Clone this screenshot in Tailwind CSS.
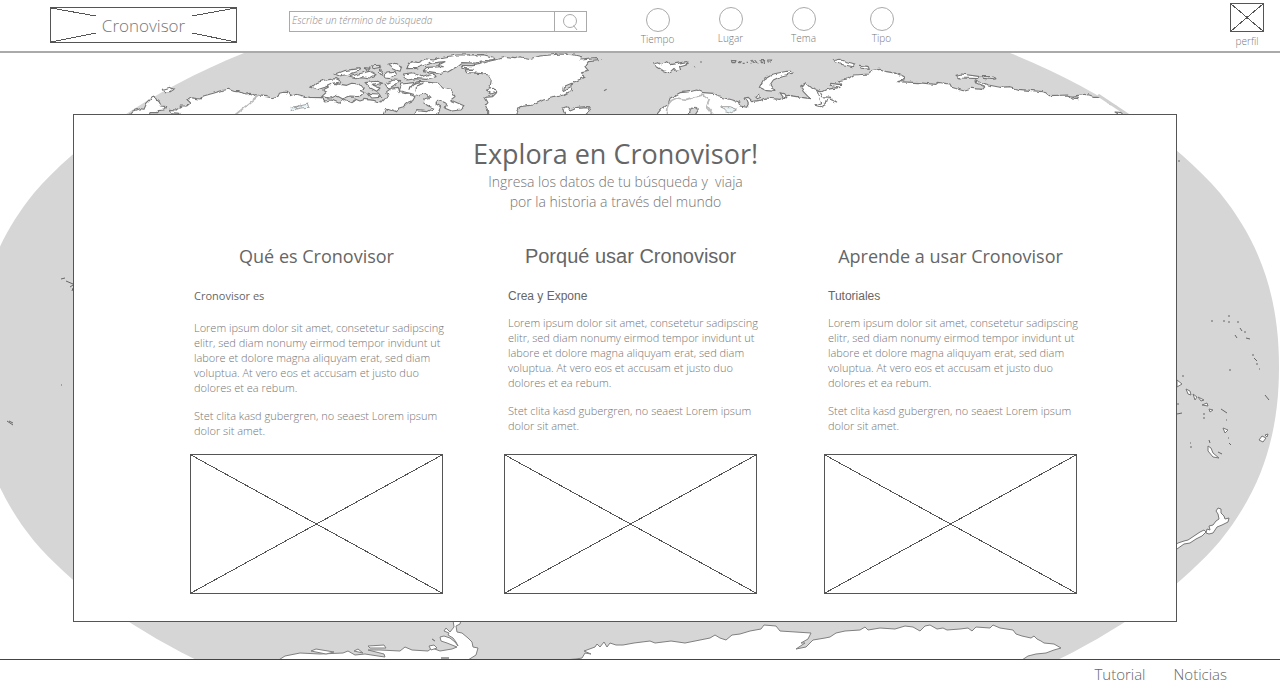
<!DOCTYPE html>
<html lang="es">
<head>
<meta charset="utf-8">
<meta name="viewport" content="width=device-width, initial-scale=1">
<title>Cronovisor</title>
<script src="https://cdn.jsdelivr.net/npm/@tailwindcss/browser@4"></script>
</head>
<body class="flex min-h-screen flex-col bg-white font-['Open_Sans','Noto_Sans',sans-serif] font-light text-[#757575]">

<header class="flex h-[53px] shrink-0 items-start border-b-2 border-[#aaaaaa] pl-[50px] pr-4">
  <a href="#" class="relative mt-[7px] flex h-9 w-[187px] shrink-0 items-center justify-center border border-[#555555] text-[17px] text-[#777777]">
    <svg class="absolute inset-0 h-full w-full" viewBox="0 0 185 34" preserveAspectRatio="none" fill="none" stroke="#555" shape-rendering="crispEdges" aria-hidden="true">
      <path d="M0 0L45 8M185 0L141 8M0 34L45 25M185 34L141 25"/>
    </svg>
    <span class="pt-px">Cronovisor</span>
  </a>

  <form class="ml-[52px] mt-[11px] flex h-[21px] w-[298px] border border-[#aaaaaa]" role="search">
    <input type="search" aria-label="Buscar" placeholder="Escribe un término de búsqueda" class="min-w-0 flex-1 px-[2px] pb-[2px] font-['Open_Sans','Noto_Sans',sans-serif] text-[10px] font-light italic text-[#777777] outline-none placeholder:text-[#888888]">
    <button type="button" aria-label="Buscar" class="flex w-8 items-center justify-center border-l border-[#aaaaaa]">
      <svg class="h-[18px] w-[18px]" viewBox="0 0 18 18" fill="none" stroke="#aaa" aria-hidden="true"><circle cx="8" cy="8" r="6.5"/><path d="M11.500 12.500L15 17"/></svg>
    </button>
  </form>

  <nav class="ml-[34px] flex text-center text-[10px] leading-[14px] text-[#777777]" aria-label="Filtros">
    <a href="#" class="flex w-[73px] flex-col items-center pt-2"><span class="h-6 w-6 rounded-full border border-[#aaaaaa]"></span>Tiempo</a>
    <a href="#" class="flex w-[73px] flex-col items-center pt-[7px]"><span class="h-6 w-6 rounded-full border border-[#aaaaaa]"></span>Lugar</a>
    <a href="#" class="flex w-[73px] flex-col items-center pt-[7px]"><span class="h-6 w-6 rounded-full border border-[#aaaaaa]"></span>Tema</a>
    <a href="#" class="ml-[5px] flex w-[73px] flex-col items-center pt-[7px]"><span class="h-6 w-6 rounded-full border border-[#aaaaaa]"></span>Tipo</a>
  </nav>

  <a href="#" class="ml-auto flex flex-col items-center pt-[3px] text-[10px] leading-[14px] text-[#777777]">
    <svg class="mb-[2px] h-[29px] w-[34px]" viewBox="0 0 34 29" fill="none" stroke="#555" shape-rendering="crispEdges" aria-hidden="true"><path d="M.5 .5H33.5V28.5H.5ZM.5 .5L33.5 28.5M33.5 .5L.5 28.5"/></svg>
    perfil
  </a>
</header>

<main class="relative flex flex-1 flex-col">
  <svg class="absolute inset-0 h-full w-full" viewBox="0 53 1280 606" preserveAspectRatio="xMidYMid slice" aria-hidden="true">
    <defs>
      <!-- roughens the coastlines -->
      <filter id="coast" filterUnits="userSpaceOnUse" x="0" y="40" width="1280" height="640">
        <feTurbulence type="fractalNoise" baseFrequency=".16" numOctaves="2" seed="4" result="n"/>
        <feDisplacementMap in="SourceGraphic" in2="n" scale="4" xChannelSelector="R" yChannelSelector="G"/>
      </filter>
    </defs>
    <path fill="#d6d6d6" d="M1279 367C1279 300 1262 245 1220 193C1177 143 1105 91 1010 53H244C149 91 77 143 34 193C-8 245 -25 300 -25 367C-25 434 -8 489 34 541C77 591 149 643 244 681H1010C1105 643 1177 591 1220 541C1262 489 1279 434 1279 367Z"/>

    <!-- northern lands, drawn at three times their size -->
    <g filter="url(#coast)">
    <g transform="scale(.33333)" fill="#fff" stroke="#777" stroke-width="3.3" stroke-linejoin="round">
      <path d="M400 334L420 326 432 328 440 310 460 290 475 303 482 318 500 320 495 330 475 332 470 338 450 338 445 350H385Z"/>
      <path d="M490 268L510 262 522 268 512 275 495 275Z"/>
      <path d="M530 350L540 340 512 338 508 328 530 330 545 322 540 318 560 318 570 310 560 300 570 293 600 297 610 288 640 280 665 272 685 268 705 275 720 275 735 282 750 280 770 287 800 290 815 293 835 288 838 280 850 277 863 277 870 290 890 283 910 288 930 292 965 293 975 303 995 300 1018 310 1025 298 1050 307 1065 297 1080 303 1095 298 1125 302 1143 306 1150 298 1165 292 1160 275 1175 264 1195 262 1200 278 1230 283 1245 290 1238 302 1220 310 1210 320 1195 325 1190 335 1160 325 1150 350Z"/>
      <path d="M965 290L980 276 968 270 985 262 970 253 990 248 1040 256 1055 250 1080 252 1090 264 1078 272 1095 278 1082 290 1050 288 1030 296 1010 286 990 294Z"/>
      <path d="M932 262L945 250 975 240 1010 236 1025 245 1000 250 975 262 950 270Z"/>
      <path d="M1005 222L1030 212 1080 206 1075 214 1050 222 1018 228Z"/>
      <path d="M1045 232L1075 222 1110 214 1128 224 1110 234 1080 230 1065 236Z"/>
      <path d="M1115 198L1138 196 1142 202 1120 206ZM1140 207L1150 215 1145 226 1138 218ZM1152 228L1160 216 1185 214 1190 224 1170 236 1155 234ZM1092 203L1110 205 1104 213ZM1164 196L1185 190 1205 200 1200 214 1180 208Z"/>
      <path d="M1095 248L1130 244 1148 250 1120 256 1140 264 1130 274 1112 264ZM1104 280L1135 282 1142 292 1115 294ZM1155 252L1180 240 1205 242 1185 254 1165 266Z"/>
      <path d="M1210 222L1240 218 1265 230 1300 218 1308 230 1280 238 1245 236 1220 240Z"/>
      <path d="M1220 206L1235 185 1255 188 1280 176 1300 180 1330 172 1370 165 1450 164 1480 172 1485 178 1440 184 1445 190 1385 188 1370 200 1345 215 1320 220 1270 212 1280 202 1330 200 1315 195 1335 185 1290 190 1250 205Z"/>
      <path d="M1198 272L1205 252 1240 248 1260 244 1315 250 1325 264 1350 268 1362 282 1365 290 1352 300 1392 317 1380 330 1355 333 1335 325 1340 312 1315 300 1305 310 1322 320 1310 350H1240L1250 332 1282 335 1302 325 1285 318 1270 308 1272 298 1293 292 1280 280 1255 287 1230 280Z"/>
      <path d="M1230 270Q1232 250 1260 248M1248 272Q1245 252 1270 250" fill="none"/>
      <path d="M1463 350V330L1456 316 1464 308 1455 292 1478 290 1490 278 1485 268 1468 272 1474 240 1465 225 1440 220 1400 218 1395 210 1420 208 1386 205 1385 196 1415 197 1440 193 1470 183 1495 178 1515 172 1545 176 1560 170 1590 176 1620 168 1680 162 1720 164 1745 170 1740 180 1790 176 1795 182 1765 185 1755 200 1765 212 1745 215 1752 232 1735 240 1715 250 1690 260 1688 272 1710 262 1718 250 1714 272 1690 285 1630 300 1600 315 1560 320 1545 350Z"/>
      <path d="M1456 270L1480 265 1490 275 1475 282ZM1685 325L1700 320 1710 330 1730 322 1765 320 1772 330 1755 350H1700Z"/>
      <path d="M1958 192L1975 188 1988 194 2000 185 2010 194 2060 185 2068 190 2038 198 2042 210 2030 214 2022 205 2008 218 1990 212Z"/>
      <path d="M2194 182H2208L2205 188H2196ZM2215 182H2224L2222 188H2216ZM2283 182H2294L2292 188H2284ZM2303 180H2316L2312 186H2304ZM2100 186H2106M2082 200H2084M2228 190H2234M2240 187H2244M2252 180L2262 190M2264 180L2272 190M2252 190H2272M1812 272L1820 268M1800 177H1803M2060 191H2066" fill="none"/>
      <path d="M1965 350L1985 325 2005 310 2010 295 2040 278 2070 275 2090 270 2110 278 2140 280 2155 290 2190 298 2215 305 2220 318 2240 322 2245 312 2240 300 2232 294 2245 292 2258 305 2275 302 2300 294 2340 298 2365 286 2430 296 2410 275 2402 258 2418 248 2440 268 2460 275 2468 290 2490 292 2510 306 2490 298 2480 298 2475 315 2460 320 2445 316 2465 308 2460 295 2450 270 2465 275 2480 268 2520 262 2490 256 2492 250 2525 254 2515 242 2545 236 2560 225 2610 222 2615 212 2640 208 2660 215 2690 220 2710 230 2712 240 2690 245 2755 248 2805 253 2812 247 2850 252 2855 262 2890 272 2915 265 2948 268 2955 260 2930 250 2925 242 2965 255 3000 262 3030 260 3055 268 3130 275 3145 287 3205 285 3215 290 3255 283 3280 289 3300 289 3390 350Z"/>
      <path d="M2278 262L2290 240 2320 222 2360 214 2375 214 2378 220 2345 228 2320 240 2310 255 2325 274 2300 272Z"/>
      <path d="M2500 182L2520 178 2535 184 2565 192 2560 200 2530 194 2505 188ZM2578 196L2605 200 2608 208 2580 204ZM2868 226L2885 222 2940 230 2935 236 2880 234ZM2946 230L2975 230 2988 236 2975 238 2950 235ZM2340 278L2355 282 2364 294 2350 292ZM2266 290L2278 286 2282 292 2272 296ZM3205 286L3235 292 3232 296 3215 293ZM3345 336L3370 338 3360 345Z"/>
      <path d="M2062 350L2070 328 2085 322 2095 330 2082 350Z" fill="#d6d6d6"/>
      <path d="M2165 320L2190 320 2212 328 2195 338 2175 332Z" fill="#eaf5f8" stroke-width="2"/>
      <path d="M868 322L898 318 925 312 928 322 900 324 872 332M885 326L902 312" fill="#eaf5f8" stroke-width="2"/>
      <path d="M705 345L780 284M2000 350Q1995 305 2030 294L2060 298 2085 290 2110 285M2110 285L2128 300 2120 320 2145 350" fill="none" stroke="#bbb" stroke-width="5"/>
    </g>
    </g>
    <path d="M1098 95L1128 115" fill="none" stroke="#d0d0d0" stroke-width="3"/>

    <!-- Pacific islands and New Zealand -->
    <g fill="#fff" stroke="#777" stroke-width="1" stroke-linejoin="round">
      <path d="M1170 548L1178 543 1184 541 1188 540 1194 536 1200 532 1204 530 1206 532 1202 536 1196 539 1190 543 1184 544 1177 549ZM1206 533L1207 529 1210 530 1209 526 1213 525 1216 521 1219 519 1218 514 1216 511 1218 508 1221 509 1221 513 1224 516 1225 519 1229 518 1228 522 1222 525 1217 527 1213 533 1209 534Z"/>
      <path d="M1186 389L1190 391 1191 395 1188 394ZM1193 394L1197 397 1195 400ZM1198 397L1204 400 1201 401ZM1202 405L1207 403 1208 406ZM1209 409L1213 410 1210 412ZM1208 446L1211 448 1213 453 1219 458 1213 457 1208 451ZM1259 440L1262 436 1266 438 1263 442ZM1265 435L1268 434 1267 437ZM1223 428L1228 430 1225 433ZM1177 380L1182 384 1177 387Z"/>
      <path d="M61 279L65 278M66 281L73 284M70 287L73 285M73 288L72 291M7 421L13 425M9 421L13 423M61 385H62M1211 321H1213M1223 321H1225M1228 316H1230M1228 322H1230M1238 321V323M1240 328L1242 331M1244 332H1246M1246 338L1250 339M1235 335L1237 338M1252 355H1254M1254 358L1257 361M1256 364H1258M1259 369H1260M1229 370H1231M1182 376H1184M1178 161H1180M1221 409L1227 413M1226 420H1227M1229 443L1231 445M1228 438H1229M1203 414H1205M1203 418H1205M1190 447H1192M1190 443H1191M1177 404H1179M1177 414L1182 413M1209 440L1210 443M1218 452L1222 454M1265 395L1269 400" fill="none" stroke="#666"/>
    </g>

    <!-- Antarctica -->
    <g fill="#fff" stroke="#808080" stroke-linejoin="round">
      <path d="M277 661L285 656 300 653 320 654 343 653 348 651 355 655 365 654 378 656 385 657 384 654 368 650 380 650 400 651 405 647 412 650 428 651 432 648 440 651 452 649 457 647 452 645 447 643 441 641 440 637 444 636 450 638 455 642 458 646 456 642 453 638 448 635 449 633 444 631 446 628 450 632 454 627 453 620H461L460 624 456 626 457 632 462 633 468 638 472 642 473 647 478 648 476 655 468 660Z"/>
      <path d="M311 651L316 649 334 652 326 654ZM354 651L358 649 363 653ZM368 646L384 645 386 648 370 648ZM429 646L434 645 437 648 431 650ZM432 639L435 641ZM441 658H449Z"/>
      <path d="M550 661L576 659 582 658 585 653 591 654 584 651 595 647 597 644 600 647 604 642 607 647 610 643 616 645 623 645 634 643 650 641 655 643 671 641 685 643 705 639 710 638 715 635 720 638 726 640 732 635 740 634 750 631 761 629 764 625 776 626 780 631 811 633 808 639 801 643 805 643 796 649 806 647 813 640 825 638 830 637 836 633 845 631 860 630 865 627 868 630 880 628 895 629 905 626 913 627 920 631 925 626 930 625 937 629 943 628 947 630 960 629 968 628 972 631 976 627 990 628 993 625 1000 628 1013 630 1016 634 1022 636 1031 638 1034 636 1037 639 1041 641 1044 643 1054 644 1061 648 1054 650 1046 653 1036 654 1028 656 1022 660 1012 661Z"/>
    </g>
  </svg>

  <section class="relative mb-[37px] ml-[73px] mr-[103px] mt-[61px] flex-1 border border-[#555555] bg-white pb-[27px] pl-[116px] pr-[99px] pt-[19px]">
    <div class="pr-9 text-center">
      <h1 class="pt-px text-[27px] font-normal leading-[37px] text-[#666666]">Explora en Cronovisor!</h1>
      <p class="text-[14px] leading-5">Ingresa los datos de tu búsqueda y&nbsp; viaja<br>por la historia a través del mundo</p>
    </div>

    <div class="mt-[30px] flex text-[11px] leading-[15px]">
      <article class="mr-[61px] flex min-w-0 flex-1 flex-col">
        <h2 class="text-center text-[18px] font-normal leading-[28px] text-[#666666]">Qué es Cronovisor</h2>
        <div class="h-[184px] whitespace-nowrap pl-1">
          <h3 class="pt-[18px] font-normal text-[#666666]">Cronovisor es</h3>
          <p class="mt-[17px]">Lorem ipsum dolor sit amet, consetetur sadipscing<br>elitr, sed diam nonumy eirmod tempor invidunt ut<br>labore et dolore magna aliquyam erat, sed diam<br>voluptua. At vero eos et accusam et justo duo<br>dolores et ea rebum.</p>
          <p class="mt-[13px]">Stet clita kasd gubergren, no seaest Lorem ipsum<br>dolor sit amet.</p>
        </div>
        <svg class="h-[140px] w-full border border-[#555555]" viewBox="0 0 251 138" preserveAspectRatio="none" stroke="#555" shape-rendering="crispEdges" role="img" aria-label="Imagen"><path d="M0 0L251 138M251 0L0 138"/></svg>
      </article>
      <article class="mr-[67px] flex min-w-0 flex-1 flex-col">
        <h2 class="text-center font-['Liberation_Sans',sans-serif] text-[20px] font-normal leading-[28px] text-[#666666]">Porqué usar Cronovisor</h2>
        <div class="h-[184px] whitespace-nowrap pl-1">
          <h3 class="pt-[19px] font-['Liberation_Sans',sans-serif] text-[12px] font-normal text-[#666666]">Crea y Expone</h3>
          <p class="mt-[11px]">Lorem ipsum dolor sit amet, consetetur sadipscing<br>elitr, sed diam nonumy eirmod tempor invidunt ut<br>labore et dolore magna aliquyam erat, sed diam<br>voluptua. At vero eos et accusam et justo duo<br>dolores et ea rebum.</p>
          <p class="mt-[13px]">Stet clita kasd gubergren, no seaest Lorem ipsum<br>dolor sit amet.</p>
        </div>
        <svg class="h-[140px] w-full border border-[#555555]" viewBox="0 0 251 138" preserveAspectRatio="none" stroke="#555" shape-rendering="crispEdges" role="img" aria-label="Imagen"><path d="M0 0L251 138M251 0L0 138"/></svg>
      </article>
      <article class="flex min-w-0 flex-1 flex-col">
        <h2 class="text-center text-[18px] font-normal leading-[28px] text-[#666666]">Aprende a usar Cronovisor</h2>
        <div class="h-[184px] whitespace-nowrap pl-1">
          <h3 class="pt-[19px] font-['Liberation_Sans',sans-serif] text-[12px] font-normal text-[#666666]">Tutoriales</h3>
          <p class="mt-[11px]">Lorem ipsum dolor sit amet, consetetur sadipscing<br>elitr, sed diam nonumy eirmod tempor invidunt ut<br>labore et dolore magna aliquyam erat, sed diam<br>voluptua. At vero eos et accusam et justo duo<br>dolores et ea rebum.</p>
          <p class="mt-[13px]">Stet clita kasd gubergren, no seaest Lorem ipsum<br>dolor sit amet.</p>
        </div>
        <svg class="h-[140px] w-full border border-[#555555]" viewBox="0 0 251 138" preserveAspectRatio="none" stroke="#555" shape-rendering="crispEdges" role="img" aria-label="Imagen"><path d="M0 0L251 138M251 0L0 138"/></svg>
      </article>
    </div>
  </section>
</main>

<footer class="flex h-6 shrink-0 items-center justify-end gap-[28px] border-t border-[#444444] pr-[53px] pt-[4px] text-[15px] leading-5 text-[#666666]">
  <a href="#">Tutorial</a>
  <a href="#">Noticias</a>
</footer>
</body>
</html>
